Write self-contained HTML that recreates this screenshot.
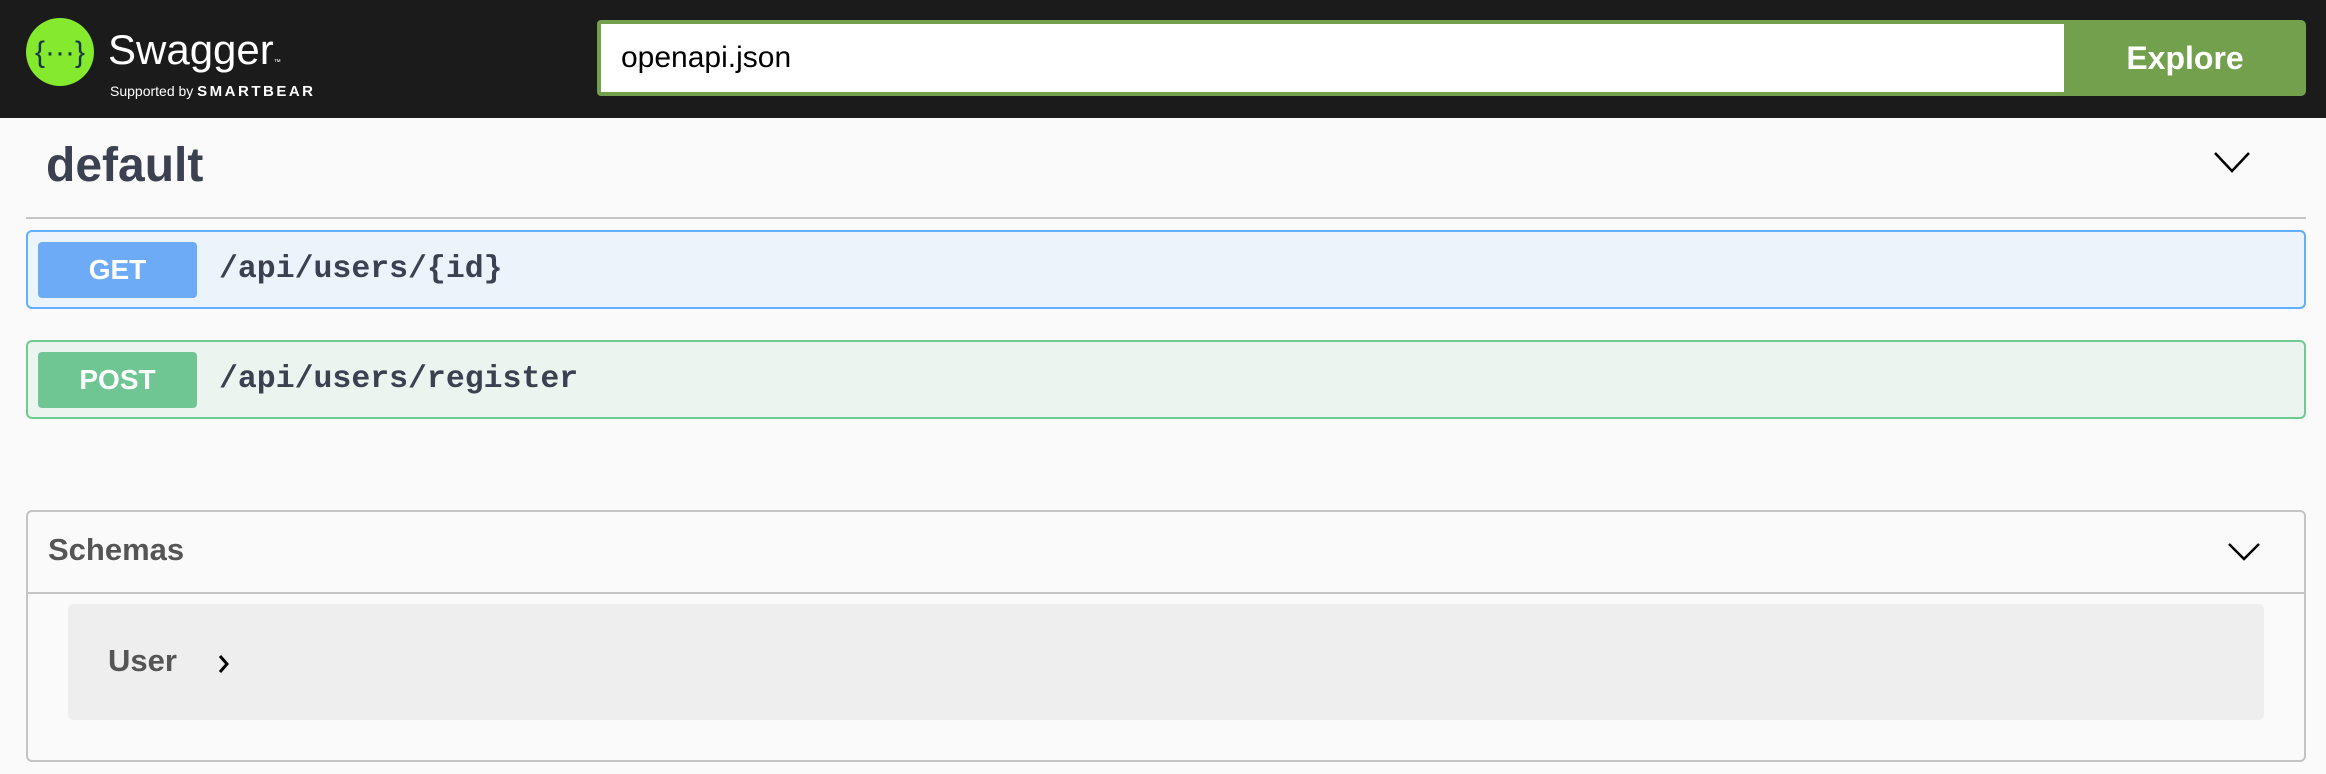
<!DOCTYPE html>
<html><head><meta charset="utf-8"><style>
*{margin:0;padding:0;box-sizing:border-box}
body{width:2326px;height:774px;background:#fafafa;font-family:"Liberation Sans",sans-serif;position:relative;overflow:hidden}
.abs{position:absolute}
.hdr{left:0;top:0;width:2326px;height:118px;background:#1b1b1b}
.mono{font-family:"Liberation Mono",monospace;font-weight:bold;color:#3b4151}
</style></head><body>
<div class="abs hdr"></div>
<svg class="abs" style="left:26px;top:18px" width="68" height="68" viewBox="0 0 68 68">
<circle cx="34" cy="34" r="34" fill="#85ea2d"/>
<text x="34" y="44" text-anchor="middle" font-family="Liberation Sans" font-size="30" fill="#173647">{···}</text>
</svg>
<div class="abs" style="left:108px;top:26px;font-size:42px;color:#fff;line-height:48px">Swagger<span style="font-size:7px;vertical-align:baseline">™</span></div>
<div class="abs" style="left:110px;top:83px;font-size:14px;color:#fff;line-height:16px">Supported by <span style="font-size:15px;letter-spacing:2.5px;font-weight:bold">SMARTBEAR</span></div>
<div class="abs" style="left:597px;top:20px;width:1470px;height:76px;background:#73a04c;border-radius:4px 0 0 4px"></div>
<div class="abs" style="left:601px;top:24px;width:1463px;height:68px;background:#fff;font-size:30px;line-height:68px;padding-left:20px;color:#000">openapi.json</div>
<div class="abs" style="left:2064px;top:20px;width:242px;height:76px;background:#73a04c;border-radius:0 5px 5px 0;color:#fff;font-weight:bold;font-size:32px;line-height:76px;text-align:center">Explore</div>

<div class="abs" style="left:46px;top:138px;font-size:48px;font-weight:bold;color:#3b4151;line-height:56px">default</div>
<svg class="abs" style="left:2212px;top:150px" width="40" height="26"><path d="M3 3 L20 21 L37 3" fill="none" stroke="#000" stroke-width="2.5"/></svg>
<div class="abs" style="left:26px;top:217px;width:2280px;height:2px;background:#c4c4c4"></div>

<div class="abs" style="left:26px;top:230px;width:2280px;height:79px;background:#ebf3fb;border:2px solid #61affe;border-radius:6px"></div>
<div class="abs" style="left:38px;top:242px;width:159px;height:56px;background:#6eabf7;border-radius:4px;color:#fff;font-weight:bold;font-size:28px;line-height:56px;text-align:center">GET</div>
<div class="abs mono" style="left:219px;top:250px;font-size:31.5px;line-height:40px">/api/users/{id}</div>

<div class="abs" style="left:26px;top:340px;width:2280px;height:79px;background:#ebf4ef;border:2px solid #6ecb92;border-radius:6px"></div>
<div class="abs" style="left:38px;top:352px;width:159px;height:56px;background:#6fc693;border-radius:4px;color:#fff;font-weight:bold;font-size:28px;line-height:56px;text-align:center">POST</div>
<div class="abs mono" style="left:219px;top:360px;font-size:31.5px;line-height:40px">/api/users/register</div>

<div class="abs" style="left:26px;top:510px;width:2280px;height:252px;border:2px solid #c4c4c4;border-radius:6px"></div>
<div class="abs" style="left:26px;top:592px;width:2280px;height:2px;background:#c4c4c4"></div>
<div class="abs" style="left:48px;top:532px;font-size:31px;font-weight:bold;color:#555;line-height:36px">Schemas</div>
<svg class="abs" style="left:2226px;top:540px" width="36" height="24"><path d="M3 4 L18 19 L33 4" fill="none" stroke="#000" stroke-width="2.5"/></svg>
<div class="abs" style="left:68px;top:604px;width:2196px;height:116px;background:#eee;border-radius:6px"></div>
<div class="abs" style="left:108px;top:643px;font-size:31px;font-weight:bold;color:#555;line-height:36px">User</div>
<svg class="abs" style="left:216px;top:652px" width="16" height="24"><path d="M4 4 L11 12 L4 20" fill="none" stroke="#000" stroke-width="3"/></svg>
</body></html>
